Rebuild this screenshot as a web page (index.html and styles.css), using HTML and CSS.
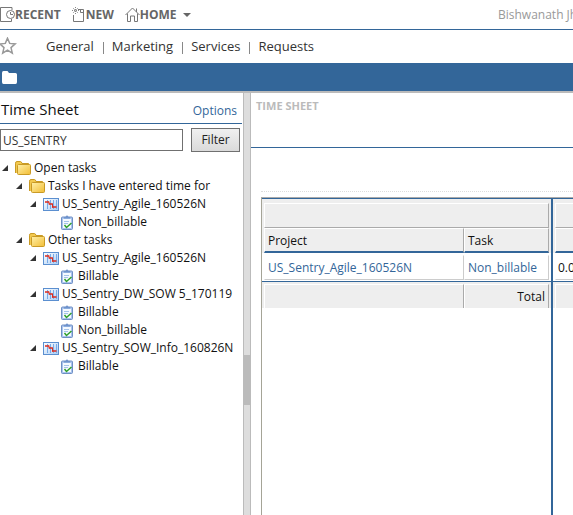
FILE: index.html
```html
<!DOCTYPE html>
<html lang="en">
<head>
<meta charset="utf-8">
<title>Time Sheet</title>
<link rel="stylesheet" href="styles.css">
</head>
<body>
<svg class="defs" aria-hidden="true">
  <defs>
    <linearGradient id="gold" x1="0" y1="0" x2="1" y2="1"><stop offset="0" stop-color="#fff0a8"/><stop offset="1" stop-color="#f2bd35"/></linearGradient>
    <linearGradient id="sky" x1="0" y1="0" x2="1" y2="1"><stop offset="0" stop-color="#ffffff"/><stop offset="1" stop-color="#a9cdf5"/></linearGradient>
    <symbol id="folder" viewBox="0 0 16 14">
      <path d="M.5 12V2.200Q.5.500 2 .500h3.500Q6.500.500 7 2.500h6.500V12" fill="#f3c94e" stroke="#c99a25"/>
      <rect x="2.500" y="3.500" width="13" height="10" rx="1" fill="url(#gold)" stroke="#c99a25"/>
    </symbol>
    <symbol id="project" viewBox="0 0 16 13">
      <rect x=".5" y=".5" width="15" height="12" fill="url(#sky)" stroke="#5b8fd0"/>
      <path d="M4.500 2v9M7.500 2v9M10.500 2v9M13.500 2v9" stroke="#78aae6"/>
      <path d="M2 4h4M6 6h3.500M9 9h4.500" stroke="#dc2a1c" stroke-width="1.600" fill="none"/>
      <path d="M6 3.500V6.500M9.500 5.500V9.500" stroke="#dc2a1c" fill="none"/>
    </symbol>
    <symbol id="task" viewBox="0 0 12 15">
      <rect x=".5" y="2" width="11" height="12.500" rx="1" fill="#a9c4ee" stroke="#6f8fc4"/>
      <path d="M2 4h8v9H2z" fill="#f4f9ff"/>
      <path d="M3 3.500V2h1.500Q6-.8 7.500 2H9v1.500z" fill="#6f93cc"/>
      <path d="M3 6.500h5M3 8.500h4" stroke="#a5c3ea"/>
      <path d="M3.500 10l2 2.500L10.500 8" fill="none" stroke="#2fa02b" stroke-width="1.500"/>
    </symbol>
    <symbol id="arrow" viewBox="0 0 6 6"><path d="M6 0v6H0z" fill="#333"/></symbol>
  </defs>
</svg>

<header class="topbar">
  <a class="top-link recent" href="#">
    <svg width="15" height="16" viewBox="0 0 15 16" fill="none" stroke="#777"><path d="M12 3V.5H.5v14h11V12"/><circle cx="10.500" cy="7.500" r="4"/><path d="M10.500 5v2.500H13"/></svg>
    <span>RECENT</span>
  </a>
  <a class="top-link new" href="#">
    <svg width="14" height="16" viewBox="0 0 14 16" fill="none" stroke="#777"><path d="M6 2.500h5.500v12h-10V8"/><path d="M3.500 0v7M0 3.500h7M1 1l5 5M6 1L1 6" stroke="#888" stroke-dasharray="1 1"/><path d="M8.500 3v2.500h3"/></svg>
    <span>NEW</span>
  </a>
  <a class="top-link home" href="#">
    <svg width="15" height="15" viewBox="0 0 15 15" fill="none" stroke="#777"><path d="M.5 8L7.500 1l7 7M2.500 6.500v8h3V9h4v5.500h3v-8M11.500 5V1.500"/></svg>
    <span>HOME</span>
    <svg class="caret" width="8" height="4" viewBox="0 0 8 4"><path d="M0 0h8L4 4z" fill="#666"/></svg>
  </a>
  <span class="user">Bishwanath Jha</span>
</header>

<nav class="menu">
  <svg class="star" width="18" height="18" viewBox="0 0 18 18"><path d="M7.500 1.200l2.200 5.200 5.500.5-4.200 3.700 1.300 5.600-4.800-3-4.800 3L4 10.600-.2 6.900l5.500-.5z" fill="none" stroke="#999" stroke-width="1.500"/></svg>
  <a href="#">General</a><a href="#">Marketing</a><a href="#">Services</a><a href="#">Requests</a>
</nav>

<div class="banner">
  <svg width="15" height="13" viewBox="0 0 15 13"><path d="M0 11V2Q0 0 1.500 0h4L7 2h6.500Q15 2 15 3.500V11q0 2-1.500 2h-12Q0 13 0 11z" fill="#fff"/></svg>
</div>

<main class="workspace">
  <aside class="sidebar">
    <div class="side-head"><h1>Time Sheet</h1><a href="#">Options</a></div>
    <form class="filter">
      <input type="text" value="US_SENTRY" aria-label="Filter tasks">
      <button type="button">Filter</button>
    </form>
    <ul class="tree">
      <li><div class="node"><svg class="arrow"><use href="#arrow"/></svg><svg class="folder"><use href="#folder"/></svg>Open tasks</div>
        <ul>
          <li><div class="node"><svg class="arrow"><use href="#arrow"/></svg><svg class="folder"><use href="#folder"/></svg>Tasks I have entered time for</div>
            <ul>
              <li><div class="node"><svg class="arrow"><use href="#arrow"/></svg><svg class="project"><use href="#project"/></svg>US_Sentry_Agile_160526N</div>
                <ul><li class="node leaf"><svg class="task"><use href="#task"/></svg>Non_billable</li></ul></li>
            </ul></li>
          <li><div class="node"><svg class="arrow"><use href="#arrow"/></svg><svg class="folder"><use href="#folder"/></svg>Other tasks</div>
            <ul>
              <li><div class="node"><svg class="arrow"><use href="#arrow"/></svg><svg class="project"><use href="#project"/></svg>US_Sentry_Agile_160526N</div>
                <ul><li class="node leaf"><svg class="task"><use href="#task"/></svg>Billable</li></ul></li>
              <li><div class="node"><svg class="arrow"><use href="#arrow"/></svg><svg class="project"><use href="#project"/></svg>US_Sentry_DW_SOW 5_170119</div>
                <ul><li class="node leaf"><svg class="task"><use href="#task"/></svg>Billable</li><li class="node leaf"><svg class="task"><use href="#task"/></svg>Non_billable</li></ul></li>
              <li><div class="node"><svg class="arrow"><use href="#arrow"/></svg><svg class="project"><use href="#project"/></svg>US_Sentry_SOW_Info_160826N</div>
                <ul><li class="node leaf"><svg class="task"><use href="#task"/></svg>Billable</li></ul></li>
            </ul></li>
        </ul></li>
    </ul>
  </aside>

  <div class="splitter"><div class="grip"></div></div>

  <section class="content">
    <h2>TIME SHEET</h2>
    <div class="sheet">
      <div class="grids">
        <table class="frozen">
          <colgroup><col class="c-project"><col class="c-task"></colgroup>
          <thead>
            <tr class="group"><td colspan="2"><div class="cell"></div></td></tr>
            <tr class="names"><th><div class="cell">Project</div></th><th><div class="cell">Task</div></th></tr>
          </thead>
          <tbody><tr><td><div class="cell"><a href="#">US_Sentry_Agile_160526N</a></div></td><td><div class="cell"><a href="#">Non_billable</a></div></td></tr></tbody>
          <tfoot><tr><td><div class="cell"></div></td><td><div class="cell total">Total</div></td></tr></tfoot>
        </table>
        <div class="scroll">
          <table class="days">
            <thead>
              <tr class="group"><td><div class="cell"></div></td></tr>
              <tr class="names"><td><div class="cell"></div></td></tr>
            </thead>
            <tbody><tr><td><div class="cell hours">0.00</div></td></tr></tbody>
            <tfoot><tr><td><div class="cell"></div></td></tr></tfoot>
          </table>
        </div>
      </div>
    </div>
  </section>
</main>
</body>
</html>
```

FILE: styles.css
```css
* { box-sizing: border-box; }

body {
  margin: 0;
  height: 100vh;
  display: flex;
  flex-direction: column;
  overflow: hidden;
  background: #fff;
  color: #111;
  font: 12px/18px "Open Sans", "Noto Sans", sans-serif;
}

a { color: #336699; text-decoration: none; }
svg { flex: none; display: block; }
ul { margin: 0; padding: 0; list-style: none; }
.defs { position: absolute; width: 0; height: 0; }

.topbar {
  flex: none;
  display: flex;
  align-items: center;
  height: 30px;
  border-bottom: 1px solid #336699;
  overflow: hidden;
}
.top-link {
  display: flex;
  align-items: center;
  color: #666;
  font-weight: 700;
  white-space: nowrap;
}
.new { margin-left: 11px; }
.home { margin-left: 11px; }
.caret { margin-left: 6px; }
.user {
  flex: none;
  width: 75px;
  margin-left: auto;
  color: #999;
  white-space: nowrap;
}

.menu {
  flex: none;
  display: flex;
  align-items: center;
  height: 33px;
  padding-bottom: 2px;
  font-size: 13px;
}
.menu a { color: #333; }
.menu .star { margin-right: 28px; }
.menu a + a::before {
  content: "";
  display: inline-block;
  height: 12px;
  margin: 0 8px 0 9px;
  border-left: 1px solid #888;
  vertical-align: -3px;
}

.banner {
  flex: none;
  display: flex;
  align-items: center;
  height: 30px;
  padding-left: 2px;
  background: #336699;
  border-bottom: 2px solid #bbb;
}

.workspace { flex: 1; display: flex; min-height: 0; }

.sidebar { flex: 0 0 243px; min-width: 0; }
.side-head {
  display: flex;
  align-items: baseline;
  justify-content: space-between;
  height: 31px;
  margin-right: 1px;
  padding: 7px 5px 0 1px;
  border-bottom: 1px solid #336699;
}
.side-head h1 { margin: 0; font-size: 15px; font-weight: 400; }
.filter {
  display: flex;
  align-items: center;
  gap: 8px;
  padding: 4px 3px 7px 0;
}
.filter input {
  flex: 1;
  min-width: 0;
  height: 22px;
  padding: 0 2px;
  border: 1px solid #707070;
  color: #333;
  font: inherit;
}
.filter button {
  width: 49px;
  height: 24px;
  padding: 0;
  border: 1px solid #707070;
  background: linear-gradient(#f0f0f0, #dadada);
  color: #222;
  font: inherit;
}

.tree ul { padding-left: 14px; }
.node { display: flex; align-items: center; height: 18px; padding-left: 2px; white-space: nowrap; }
.arrow { width: 6px; height: 6px; margin-right: 7px; }
.folder { width: 16px; height: 14px; margin-right: 3px; }
.project { width: 16px; height: 13px; margin-right: 3px; }
.task { width: 12px; height: 15px; margin-right: 5px; }
.leaf { padding-left: 19px; }

.splitter {
  flex: 0 0 8px;
  display: flex;
  flex-direction: column;
  justify-content: center;
  background: #ddd;
  border: solid #bbb;
  border-width: 0 1px;
}
.grip { height: 50px; margin: 152px -1px 0; background: #bbb; }

.content { flex: 1; min-width: 0; display: flex; flex-direction: column; }
.content h2 {
  flex: none;
  height: 55px;
  margin: 0;
  padding: 4px 5px;
  border-bottom: 1px solid #336699;
  color: #bbb;
  font-size: 11px;
  font-weight: 700;
}
.sheet {
  flex: 1;
  margin: 43px 0 0 10px;
  padding-top: 5px;
  border-top: 1px dotted #ddd;
  display: flex;
}
.grids {
  flex: 1;
  min-width: 0;
  display: flex;
  border-left: 1px solid #a5a497;
  border-top: 1px solid #aaa;
}

table { table-layout: fixed; border-spacing: 0; align-self: flex-start; border-top: 1px solid #336699; }
.frozen { width: 289px; }
.days { width: 100%; }
.c-project { width: 202px; }
.scroll { flex: 1; min-width: 0; border-left: 2px solid #336699; overflow: hidden; }

td, th { padding: 0; font-weight: 400; text-align: left; background: #eee; }
td:first-child, th:first-child { padding-left: 2px; }
.frozen td:last-child, .frozen th:last-child { padding-right: 2px; }
.cell {
  height: 25px;
  padding: 3px 3px 0;
  border: 1px solid #aaa;
  border-top-color: #fff;
  border-left-color: #fff;
  white-space: nowrap;
}
.days .cell { border-right: 0; }
.group td { padding-top: 4px; }
.names .cell { border-bottom: 2px solid #336699; }
tbody td { padding-top: 2px; padding-bottom: 1px; background: #fff; border-bottom: 1px solid #336699; }
tbody .cell { border-right-color: #ccc; border-bottom-color: #ccc; }
tfoot td { padding-top: 2px; }
tfoot .cell { height: 24px; border-bottom: 0; }
.total { text-align: right; }
.cell.hours { padding-left: 2px; }
```
